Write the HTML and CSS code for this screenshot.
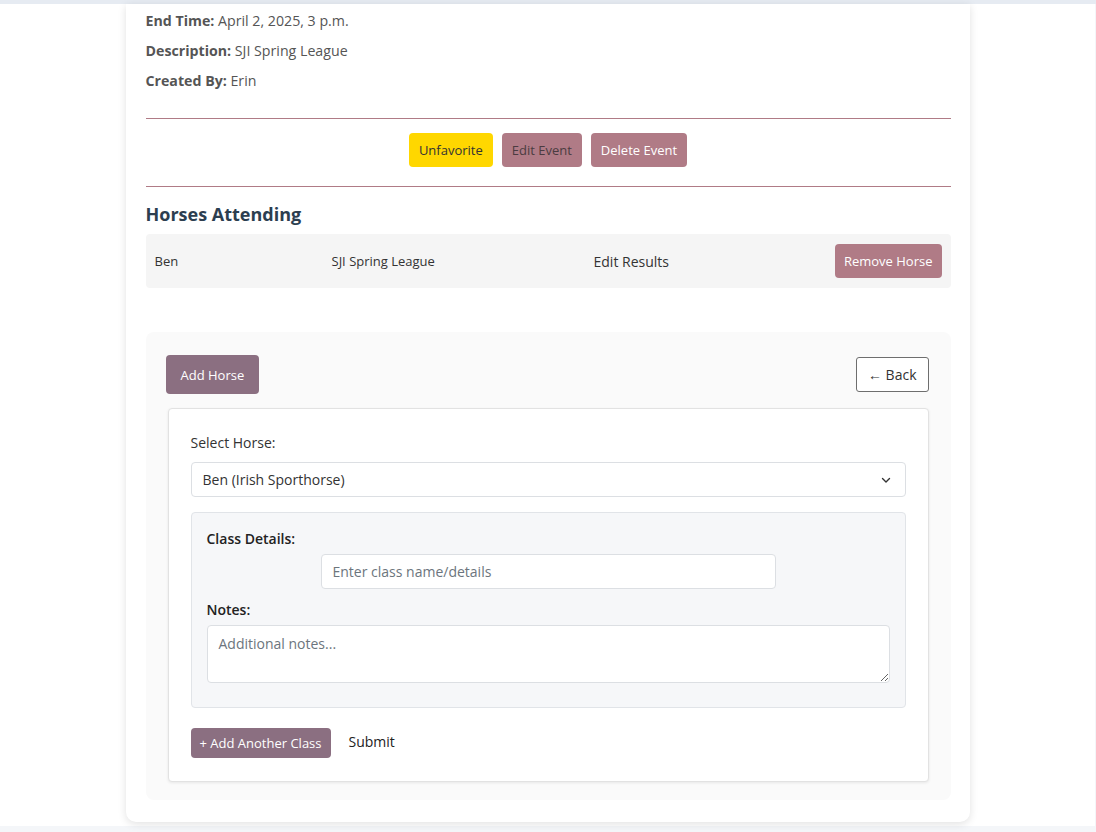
FILE: index.html
```html
<!DOCTYPE html>
<html lang="en">
<head>
<meta charset="utf-8">
<title>Event Detail</title>
<link rel="stylesheet" href="styles.css">
</head>
<body>
<div class="topband"></div>
<div class="page">
  <div class="card">
    <div class="info">
      <p><strong>End Time:</strong> April 2, 2025, 3 p.m.</p>
      <p><strong>Description:</strong> SJI Spring League</p>
      <p><strong>Created By:</strong> Erin</p>
    </div>
    <hr class="rule">
    <div class="actions">
      <button class="btn btn-yellow">Unfavorite</button>
      <button class="btn btn-mauve btn-darktext">Edit Event</button>
      <button class="btn btn-mauve">Delete Event</button>
    </div>
    <hr class="rule rule-bottom">
    <h2 class="section-title">Horses Attending</h2>
    <div class="horse-row">
      <span class="col-name">Ben</span>
      <span class="col-event">SJI Spring League</span>
      <span class="col-link">Edit Results</span>
      <button class="btn btn-mauve btn-remove">Remove Horse</button>
    </div>

    <div class="panel">
      <div class="panel-head">
        <button class="btn btn-plum btn-add">Add Horse</button>
        <button class="btn-back">← Back</button>
      </div>
      <form class="form-card">
        <label class="lbl" for="horse">Select Horse:</label>
        <div class="select-wrap">
          <select id="horse" class="field select">
            <option>Ben (Irish Sporthorse)</option>
          </select>
          <svg class="chev" width="12" height="12" viewBox="0 0 12 12"><path d="M2.5 4.5 L6 8 L9.5 4.5" fill="none" stroke="#333" stroke-width="1.4" stroke-linecap="round" stroke-linejoin="round"/></svg>
        </div>
        <div class="class-box">
          <label class="lbl lbl-bold" for="cls">Class Details:</label>
          <input id="cls" class="field class-input" type="text" placeholder="Enter class name/details">
          <label class="lbl lbl-bold lbl-notes" for="notes">Notes:</label>
          <textarea id="notes" class="field notes" placeholder="Additional notes..."></textarea>
        </div>
        <div class="form-actions">
          <button type="button" class="btn btn-plum btn-another">+ Add Another Class</button>
          <button type="button" class="btn-submit">Submit</button>
        </div>
      </form>
    </div>
  </div>
</div>
</body>
</html>
```

FILE: styles.css
```css
* { box-sizing: border-box; }
html, body { margin: 0; padding: 0; }
body {
  background: #f4f6f9;
  font-family: "Open Sans", "Noto Sans", "Liberation Sans", sans-serif;
  font-size: 14px;
  color: #333;
  height: 832px;
  overflow: hidden;
}
.topband {
  height: 4px;
  background: #e6ebf2;
}
.page {
  background: #ffffff;
  margin-right: 1px;
  height: 822px;
  padding: 0;
}
.card {
  width: 844px;
  margin: 0 auto;
  background: #fff;
  border-radius: 0 0 10px 10px;
  box-shadow: 0 2px 8px rgba(0,0,0,0.12);
  padding: 2px 19px 22px 20px;
}
.info p {
  margin: 0;
  line-height: 30px;
  font-size: 14.2px;
  color: #555;
}
.info strong { color: #555; font-weight: 700; }
.rule {
  border: 0;
  height: 1px;
  background: #b07b86;
  margin: 22px 0 0 0;
}
.rule-bottom { margin: 0; }
.actions {
  display: flex;
  justify-content: center;
  gap: 9px;
  padding: 14px 0 19px;
}
.btn {
  font-family: inherit;
  font-size: 13px;
  border: 0;
  border-radius: 4px;
  height: 34px;
  padding: 0 10px;
  cursor: pointer;
}
.btn-yellow { background: #ffd700; color: #333; }
.btn-mauve { background: #b07b86; color: #fff; }
.btn-darktext { color: #4b3b41; }
.btn-plum { background: #8b6f81; color: #fff; }
.section-title {
  margin: 15px 0 8px;
  font-size: 18px;
  line-height: 24px;
  font-weight: 700;
  color: #2c3e50;
}
.horse-row {
  display: flex;
  align-items: center;
  background: #f5f5f5;
  border-radius: 4px;
  height: 54px;
  padding: 0 9px;
  font-size: 13px;
  color: #333;
}
.col-name { width: 177px; }
.col-event { width: 262px; }
.col-link { flex: 1; font-size: 14px; }
.btn-remove { padding: 0 9px; }

.panel {
  margin-top: 44px;
  background: #fafafa;
  border-radius: 8px;
  padding: 23px 22px 18px 20px;
}
.panel-head {
  display: flex;
  justify-content: space-between;
  align-items: center;
  margin-bottom: 14px;
}
.btn-add {
  height: 39px;
  padding: 0 15px;
  font-size: 13px;
  border-radius: 4px;
}
.btn-back {
  font-family: inherit;
  font-size: 14px;
  background: #fff;
  color: #333;
  border: 1px solid #6e6e6e;
  border-radius: 3px;
  height: 35px;
  padding: 0 11px;
}
.form-card {
  margin-left: 2px;
  background: #fff;
  border: 1px solid #e2e2e2;
  border-radius: 4px;
  box-shadow: 0 1px 3px rgba(0,0,0,0.08);
  padding: 24px 22px 23px 22px;
}
.lbl {
  display: block;
  font-size: 14px;
  line-height: 20px;
  color: #333;
  margin-bottom: 9px;
}
.lbl-bold { font-weight: 600; color: #222; margin-bottom: 5px; }
.field {
  font-family: inherit;
  font-size: 14px;
  color: #333;
  background: #fff;
  border: 1px solid #dcdfe3;
  border-radius: 4px;
  outline: none;
}
.select-wrap { position: relative; }
.select {
  -webkit-appearance: none;
  appearance: none;
  width: 100%;
  height: 35px;
  padding: 0 11px;
}
.chev {
  position: absolute;
  right: 14px;
  top: 12px;
  pointer-events: none;
}
.class-box {
  margin-top: 15px;
  background: #f6f7f9;
  border: 1px solid #e1e4e8;
  border-radius: 4px;
  padding: 16px 15px 24px 15px;
}
.class-input {
  display: block;
  width: 455px;
  height: 35px;
  margin: 0 auto;
  padding: 0 11px;
}
.lbl-notes { margin-top: 11px; }
.notes {
  display: block;
  width: 100%;
  height: 58px;
  padding: 8px 11px;
  resize: vertical;
}
::placeholder { color: #6c757d; opacity: 1; }
.form-actions {
  display: flex;
  align-items: center;
  gap: 18px;
  margin-top: 20px;
}
.btn-another {
  height: 30px;
  padding: 0 9px;
  font-size: 13px;
}
.btn-submit {
  font-family: inherit;
  font-size: 14px;
  background: none;
  border: 0;
  padding: 0;
  color: #222;
  margin-top: -4px;
}
```
